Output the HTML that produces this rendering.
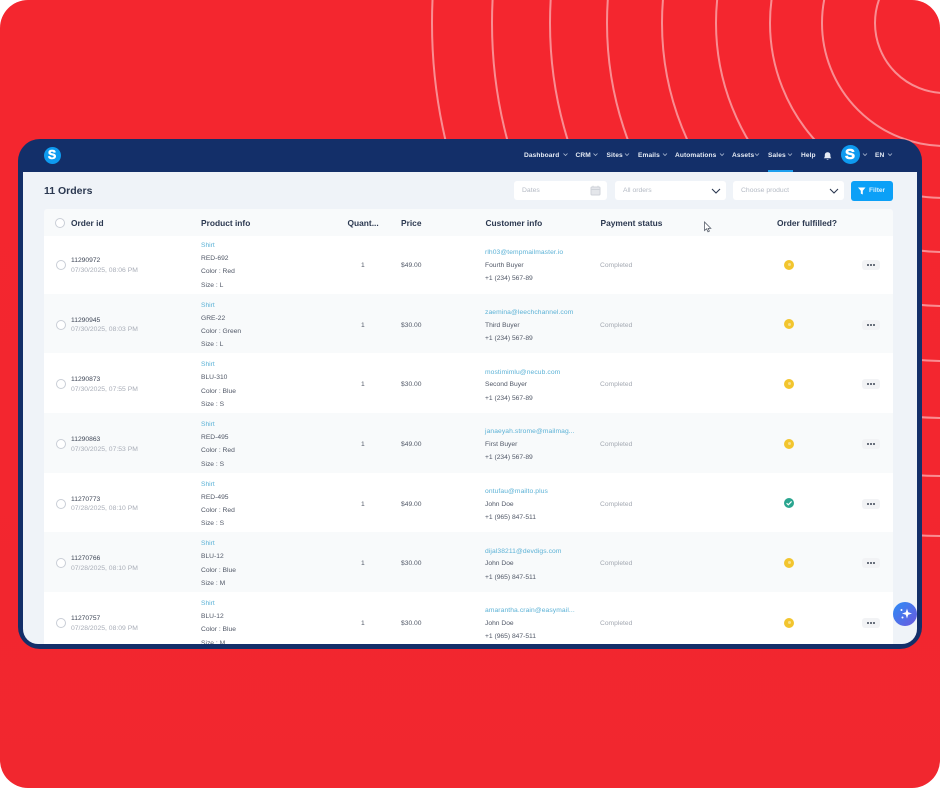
<!DOCTYPE html>
<html lang="en"><head><meta charset="utf-8"><title>11 Orders</title>
<style>
*{box-sizing:border-box;margin:0;padding:0}
html,body{width:940px;height:788px;overflow:hidden;background:#fff;font-family:"Liberation Sans",sans-serif}
#bg{position:absolute;left:0;top:0;width:940px;height:788px;border-radius:28px;background:linear-gradient(180deg,#f4262f 0%,#f3262f 60%,#f1272f 100%);overflow:hidden}
#bg svg{position:absolute;left:0;top:0}
#win{position:absolute;left:18px;top:139px;width:904px;height:510px;background:#132f69;border-radius:22px;overflow:hidden}
#in{position:absolute;left:5px;top:32.500px;width:894px;height:472.500px;background:#eff3f8;border-radius:0 0 15px 15px;overflow:hidden;filter:blur(.3px)}
#in>*{position:absolute}
#wrap{position:absolute;left:-23px;top:-171.500px;width:940px;height:788px}
#wrap>*{position:absolute}
.nav{position:absolute;top:151.500px;font-size:6.600px;line-height:8px;font-weight:bold;color:#e6ecf5;white-space:nowrap;letter-spacing:.1px;filter:blur(.2px)}
.box{background:#fff;border-radius:3px;height:19px;top:181px;font-size:6.800px;line-height:20px;color:#b4bac4;padding-left:8px}
.th{top:218px;font-size:8.400px;line-height:10px;font-weight:bold;color:#2b3850;white-space:nowrap}
.row{left:44px;width:849px;height:60px;background:#fff}
.row.t{background:#f8fafb}
.row>*{position:absolute;white-space:nowrap;font-size:6.700px;line-height:8px;color:#515867}
.ck{left:11.500px;top:26px;width:10px;height:10px;border:1px solid #c9ced6;border-radius:50%;background:#fff}
.id{left:27px;top:23px;color:#3e4656}
.dt{left:27px;top:32.700px;color:#a9aeb8;font-size:6.800px}
.a{left:157px;top:8px;color:#5cb2d6}
.b{left:157px;top:21px}
.c{left:157px;top:34.400px}
.d{left:157px;top:47.700px}
.q{left:317px;top:28px}
.p{left:357px;top:28px}
.e{left:441px;top:15.400px;color:#5cb2d6;letter-spacing:.1px}
.f{left:441px;top:28px}
.g{left:441px;top:41.400px}
.s{left:556px;top:28px;color:#a4a9b2}
.o{left:740px;top:25.500px;width:10px;height:10px;border-radius:50%;background:#f2c52e}
.o::after{content:"";position:absolute;left:3.500px;top:3.500px;width:3px;height:3px;border-radius:50%;background:#f9e08a}
.o.ok{background:#2aa58f}
.o.ok::after{display:none}
.o svg{position:absolute;left:0;top:0}
.m{left:818px;top:26px;width:18px;height:10px;border-radius:3px;background:#f2f3f5}
.m::after{content:"";position:absolute;left:5px;top:4px;width:2px;height:2px;border-radius:50%;background:#3e4656;box-shadow:3px 0 0 #3e4656,6px 0 0 #3e4656}
</style></head><body>
<div id="bg">
<svg width="940" height="788" fill="none" stroke="#fff" stroke-opacity=".48" stroke-width="2">
<circle cx="945" cy="23" r="70"/><circle cx="945" cy="23" r="123"/><circle cx="945" cy="23" r="175"/><circle cx="945" cy="23" r="229"/><circle cx="945" cy="23" r="283"/><circle cx="945" cy="23" r="338"/><circle cx="945" cy="23" r="395"/><circle cx="945" cy="23" r="453"/><circle cx="945" cy="23" r="513"/>
</svg>
</div>
<div id="win">
<div id="in"><div id="wrap">
<div style="left:44px;top:185px;font-size:10.500px;line-height:13px;font-weight:bold;color:#2b3850;white-space:nowrap">11 Orders</div>

<div class="box" style="left:514px;width:93px">Dates
<svg style="position:absolute;left:76px;top:4px" width="11" height="11" fill="none" stroke="#cfd3d9" stroke-width="1"><rect x="1" y="2" width="9" height="8" rx="1" fill="#e4e6ea"/><path d="M1 4.500H10M3 .8V2.500M8 .8V2.500"/></svg></div>
<div class="box" style="left:615px;width:111px">All orders
<svg style="position:absolute;left:96px;top:7px" width="10" height="6" fill="none" stroke="#2b3850" stroke-width="1.100"><path d="M1 1L5 5L9 1"/></svg></div>
<div class="box" style="left:733px;width:111px">Choose product
<svg style="position:absolute;left:96px;top:7px" width="10" height="6" fill="none" stroke="#2b3850" stroke-width="1.100"><path d="M1 1L5 5L9 1"/></svg></div>
<div style="left:851px;top:181px;width:42px;height:20px;border-radius:3px;background:#0ca0f7;color:#d9f0ff;font-size:6.600px;font-weight:bold;line-height:20px;padding-left:18px">Filter
<svg style="position:absolute;left:7px;top:6px" width="8" height="8" fill="#fff"><path d="M0 .5H7.500L4.800 3.800V7.500L2.800 6.600V3.800Z"/></svg></div>

<div class="row" style="top:234px;height:60px"><i class="ck"></i><span class="id">11290972</span><span class="dt">07/30/2025, 08:06 PM</span><span class="a">Shirt</span><span class="b">RED-692</span><span class="c">Color : Red</span><span class="d">Size : L</span><span class="q">1</span><span class="p">$49.00</span><span class="e">rlh03@tempmailmaster.io</span><span class="f">Fourth Buyer</span><span class="g">+1 (234) 567-89</span><span class="s">Completed</span><i class="o"></i><i class="m"></i></div>

<div class="row t" style="top:293.600px"><i class="ck"></i><span class="id">11290945</span><span class="dt">07/30/2025, 08:03 PM</span><span class="a">Shirt</span><span class="b">GRE-22</span><span class="c">Color : Green</span><span class="d">Size : L</span><span class="q">1</span><span class="p">$30.00</span><span class="e">zaemina@leechchannel.com</span><span class="f">Third Buyer</span><span class="g">+1 (234) 567-89</span><span class="s">Completed</span><i class="o"></i><i class="m"></i></div>

<div class="row" style="top:353.300px"><i class="ck"></i><span class="id">11290873</span><span class="dt">07/30/2025, 07:55 PM</span><span class="a">Shirt</span><span class="b">BLU-310</span><span class="c">Color : Blue</span><span class="d">Size : S</span><span class="q">1</span><span class="p">$30.00</span><span class="e">mostimimlu@necub.com</span><span class="f">Second Buyer</span><span class="g">+1 (234) 567-89</span><span class="s">Completed</span><i class="o"></i><i class="m"></i></div>

<div class="row t" style="top:413px"><i class="ck"></i><span class="id">11290863</span><span class="dt">07/30/2025, 07:53 PM</span><span class="a">Shirt</span><span class="b">RED-495</span><span class="c">Color : Red</span><span class="d">Size : S</span><span class="q">1</span><span class="p">$49.00</span><span class="e">janaeyah.strome@mailmag...</span><span class="f">First Buyer</span><span class="g">+1 (234) 567-89</span><span class="s">Completed</span><i class="o"></i><i class="m"></i></div>

<div class="row" style="top:472.700px"><i class="ck"></i><span class="id">11270773</span><span class="dt">07/28/2025, 08:10 PM</span><span class="a">Shirt</span><span class="b">RED-495</span><span class="c">Color : Red</span><span class="d">Size : S</span><span class="q">1</span><span class="p">$49.00</span><span class="e">ontufau@mailto.plus</span><span class="f">John Doe</span><span class="g">+1 (965) 847-511</span><span class="s">Completed</span><i class="o ok"><svg width="10" height="10" fill="none" stroke="#fff" stroke-width="1.200"><path d="M2.600 5.200L4.300 6.800L7.600 3.400"/></svg></i><i class="m"></i></div>

<div class="row t" style="top:532.400px"><i class="ck"></i><span class="id">11270766</span><span class="dt">07/28/2025, 08:10 PM</span><span class="a">Shirt</span><span class="b">BLU-12</span><span class="c">Color : Blue</span><span class="d">Size : M</span><span class="q">1</span><span class="p">$30.00</span><span class="e">dijal38211@devdigs.com</span><span class="f">John Doe</span><span class="g">+1 (965) 847-511</span><span class="s">Completed</span><i class="o"></i><i class="m"></i></div>

<div class="row" style="top:592px;height:60px"><i class="ck"></i><span class="id">11270757</span><span class="dt">07/28/2025, 08:09 PM</span><span class="a">Shirt</span><span class="b">BLU-12</span><span class="c">Color : Blue</span><span class="d">Size : M</span><span class="q">1</span><span class="p">$30.00</span><span class="e">amarantha.crain@easymail...</span><span class="f">John Doe</span><span class="g">+1 (965) 847-511</span><span class="s">Completed</span><i class="o"></i><i class="m"></i></div>

<div style="left:44px;top:209px;width:849px;height:27px;background:#f8fafb;border-radius:3px 3px 0 0"></div>
<div style="left:55px;top:217.500px;width:10px;height:10px;border:1px solid #c9ced6;border-radius:50%;background:#fff"></div>
<div class="th" style="left:71px">Order id</div>
<div class="th" style="left:201px">Product info</div>
<div class="th" style="left:347.500px">Quant...</div>
<div class="th" style="left:401px">Price</div>
<div class="th" style="left:485.500px">Customer info</div>
<div class="th" style="left:600.500px">Payment status</div>
<div class="th" style="left:777px">Order fulfilled?</div>
<svg style="left:703px;top:221px" width="10" height="12" fill="#fff" stroke="#59606c" stroke-width=".8"><path d="M1.500 1V9.500L3.600 7.800L5 10.800L6.400 10.100L5.100 7.400H7.800Z"/></svg>
</div></div>

<div style="position:absolute;left:-18px;top:-139px;width:940px;height:788px">
<div style="position:absolute;left:43.500px;top:146.500px;width:17px;height:17px;border-radius:50%;background:#0e9bf0;color:#fff;font-weight:bold;font-size:12.500px;line-height:17px;text-align:center;-webkit-text-stroke:.5px #fff">S</div>
<span class="nav" style="left:524px">Dashboard</span>
<span class="nav" style="left:575.500px">CRM</span>
<span class="nav" style="left:606.500px">Sites</span>
<span class="nav" style="left:638px">Emails</span>
<span class="nav" style="left:675px">Automations</span>
<span class="nav" style="left:732px">Assets</span>
<span class="nav" style="left:768px">Sales</span>
<span class="nav" style="left:801px">Help</span>
<span class="nav" style="left:875px">EN</span>
<svg style="position:absolute;left:0;top:0" width="940" height="171" fill="none" stroke="#aab8d0" stroke-width=".8">
<path d="M563.500 153.500l2 2 2-2M593.500 153.500l2 2 2-2M625 153.500l2 2 2-2M663 153.500l2 2 2-2M720 153.500l2 2 2-2M755 153.500l2 2 2-2M788 153.500l2 2 2-2M863 153.500l2 2 2-2M888 153.500l2 2 2-2"/>
<path d="M823.800 158.200h7.600c-.9-.8-1-1.600-1-3 0-1.800-1-2.900-2.800-2.900s-2.800 1.100-2.800 2.900c0 1.400-.1 2.200-1 3z" fill="#e6ecf5" stroke="none"/>
<path d="M826.500 159.200a1.200 1.200 0 0 0 2.200 0z" fill="#e6ecf5" stroke="none"/>
</svg>
<div style="position:absolute;left:840.500px;top:145px;width:19px;height:19px;border-radius:50%;background:#0e9bf0;color:#fff;font-weight:bold;font-size:15px;line-height:19px;text-align:center;-webkit-text-stroke:.6px #fff">S</div>
<div style="position:absolute;left:768px;top:170px;width:25px;height:1.500px;background:#1c9fee"></div>
<div style="position:absolute;left:893px;top:601.500px;width:24px;height:24px;border-radius:50%;background:linear-gradient(135deg,#2c8cf6,#6d58de)">
<svg width="24" height="24" fill="#fff"><path d="M14 6.500l1.200 3.800 3.800 1.200-3.800 1.200L14 16.500l-1.200-3.800L9 11.500l3.800-1.200z"/><circle cx="8.500" cy="8" r="1"/><circle cx="9.500" cy="15.500" r="1"/></svg>
</div>
</div>
</div>
</body></html>
